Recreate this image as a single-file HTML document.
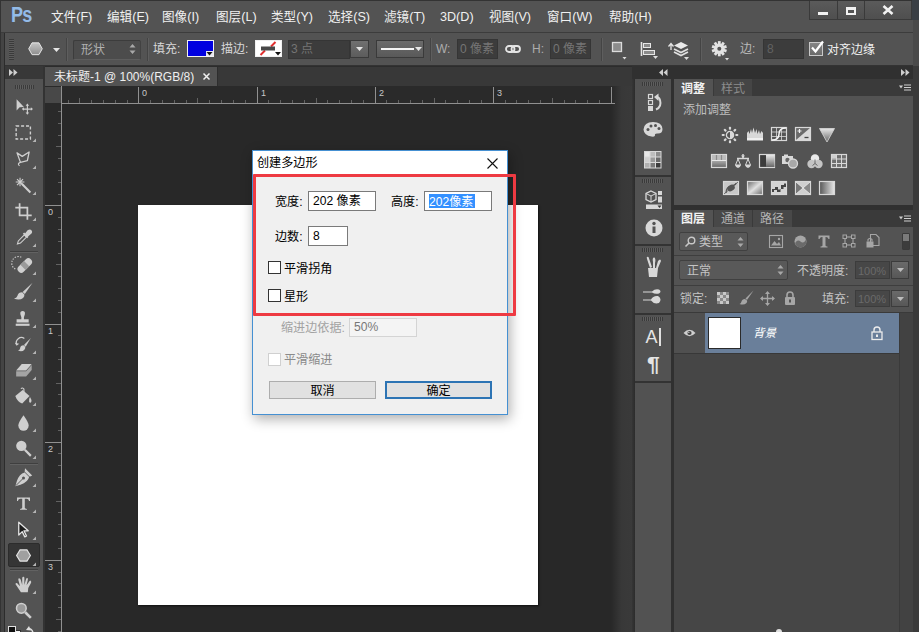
<!DOCTYPE html>
<html lang="zh-CN">
<head>
<meta charset="utf-8">
<title>Photoshop - 创建多边形</title>
<style>
html,body{margin:0;padding:0;}
body{width:919px;height:632px;overflow:hidden;position:relative;background:#535353;
 font-family:"Liberation Sans","Noto Sans CJK SC",sans-serif;font-size:12px;color:#e4e4e4;}
.a{position:absolute;}
.t{position:absolute;white-space:nowrap;line-height:16px;height:16px;}
svg{position:absolute;overflow:visible;}
/* ---------- menu bar ---------- */
#menubar{left:0;top:0;width:919px;height:32px;background:#535353;}
#menubar .t{top:9px;color:#f0f0f0;font-size:12.6px;}
#menubar #ps{left:11px;top:3px;font-size:22px;font-weight:bold;color:#93bbe8;letter-spacing:-1px;line-height:24px;height:24px;transform:scaleX(0.82);transform-origin:0 0;}
.wbtn{top:0;height:20px;background:linear-gradient(#5b5b5b,#4f4f4f);border:1px solid #3a3a3a;border-top:none;box-sizing:border-box;}
/* ---------- options bar ---------- */
#optbar{left:0;top:32px;width:919px;height:34px;background:#535353;border-top:1px solid #3c3c3c;border-bottom:1px solid #333;box-sizing:border-box;}
#optbar .t{color:#d8d8d8;}
.sep{position:absolute;top:5px;width:1px;height:23px;background:#444;border-right:1px solid #5e5e5e;}
.dk{position:absolute;background:#3c3c3c;border:1px solid #353535;box-sizing:border-box;color:#808080;}
/* ---------- left tools ---------- */
#tools{left:5px;top:66px;width:38px;height:566px;background:#535353;}
/* ---------- document ---------- */
#doc{left:45px;top:66px;width:570px;height:566px;background:#282828;}
/* ---------- right ---------- */
.ptab{position:absolute;top:0;height:17px;line-height:17px;font-size:12px;text-align:center;box-sizing:border-box;}
/* ---------- dialog ---------- */
#dlg{left:252px;top:150px;width:256px;height:265px;background:#f0f0f0;border:1px solid #4590d2;box-sizing:border-box;color:#000;box-shadow:2px 4px 12px rgba(0,0,0,.32);}
#dlg .t{color:#000;font-size:12.1px;}
.inp{position:absolute;background:#fff;border:1px solid #7a7a7a;box-sizing:border-box;height:20px;line-height:19px;padding-left:4px;font-size:12.1px;color:#000;white-space:nowrap;}
.cb{position:absolute;width:13px;height:13px;background:#fff;border:1px solid #333;box-sizing:border-box;}
.btn{position:absolute;height:18px;line-height:18px;text-align:center;background:#e1e1e1;border:1px solid #adadad;box-sizing:border-box;font-size:12.1px;color:#000;}
</style>
</head>
<body>

<!-- ================= MENU BAR ================= -->
<div id="menubar" class="a">
  <div id="ps" class="t">Ps</div>
  <div class="t" style="left:51px">文件(F)</div>
  <div class="t" style="left:107px">编辑(E)</div>
  <div class="t" style="left:162px">图像(I)</div>
  <div class="t" style="left:216px">图层(L)</div>
  <div class="t" style="left:271px">类型(Y)</div>
  <div class="t" style="left:328px">选择(S)</div>
  <div class="t" style="left:384px">滤镜(T)</div>
  <div class="t" style="left:440px">3D(D)</div>
  <div class="t" style="left:489px">视图(V)</div>
  <div class="t" style="left:547px">窗口(W)</div>
  <div class="t" style="left:609px">帮助(H)</div>
  <!-- window buttons -->
  <div class="a wbtn" style="left:809px;width:29px;"></div>
  <div class="a wbtn" style="left:837px;width:28px;"></div>
  <div class="a wbtn" style="left:864px;width:48px;"></div>
  <div class="a" style="left:818px;top:12px;width:10px;height:3px;background:#f2f2f2;"></div>
  <div class="a" style="left:846px;top:7px;width:10px;height:8px;border:2px solid #f2f2f2;border-top-width:3px;box-sizing:border-box;"></div>
  <svg style="left:882px;top:5px" width="12" height="10" viewBox="0 0 12 10"><path d="M1.5 1 L10.5 9 M10.5 1 L1.5 9" stroke="#f2f2f2" stroke-width="2.6" fill="none"/></svg>
</div>

<!-- ================= OPTIONS BAR ================= -->
<div id="optbar" class="a">
  <!-- grip -->
  <div class="a" style="left:9px;top:6px;width:5px;height:21px;background:repeating-linear-gradient(#3a3a3a 0 1px,#5c5c5c 1px 2px);"></div>
  <!-- hexagon tool -->
  <svg style="left:28px;top:9px" width="15" height="13.500" viewBox="0 0 17 15"><defs><linearGradient id="hx" x1="0" y1="0" x2="0" y2="1"><stop offset="0" stop-color="#c4c4c4"/><stop offset="1" stop-color="#8e8e8e"/></linearGradient></defs><path d="M4.6 0.8 H12.4 L16.2 7.5 L12.4 14.2 H4.6 L0.8 7.5 Z" fill="url(#hx)" stroke="#e6e6e6" stroke-width="1.1"/></svg>
  <svg style="left:53px;top:15px" width="7" height="4" viewBox="0 0 7 4"><path d="M0 0H7L3.5 4Z" fill="#e6e6e6"/></svg>
  <div class="sep" style="left:66px"></div>
  <!-- shape select -->
  <div class="dk" style="left:73px;top:7px;width:68px;height:20px;background:#4c4c4c;border-color:#3c3c3c #424242 #5e5e5e #3c3c3c;border-radius:2px;"></div>
  <div class="t" style="left:81px;top:9px;color:#b0b0b0;">形状</div>
  <svg style="left:129px;top:10px" width="7" height="12" viewBox="0 0 7 12"><path d="M0.5 4.5 L3.5 1 L6.5 4.5Z M0.5 7.5 L3.5 11 L6.5 7.5Z" fill="#a8a8a8"/></svg>
  <div class="sep" style="left:147px"></div>
  <div class="t" style="left:153px;top:8px;">填充:</div>
  <!-- fill swatch -->
  <div class="a" style="left:187px;top:7px;width:27px;height:17px;background:#0000e0;border:1px solid #f0f0f0;box-sizing:border-box;"></div>
  <svg style="left:206px;top:18px" width="7" height="5" viewBox="0 0 7 5"><rect width="7" height="5" fill="#e8e8f4"/><path d="M0.500 1H6.500L3.500 4.500Z" fill="#111"/></svg>
  <div class="t" style="left:221px;top:8px;">描边:</div>
  <!-- stroke swatch -->
  <div class="a" style="left:255px;top:7px;width:27px;height:17px;background:#fff;border:1px solid #f0f0f0;box-sizing:border-box;"></div>
  <svg style="left:255px;top:7px" width="27" height="17" viewBox="0 0 27 17"><path d="M16 6.500L20.500 2M5.500 15L10 10.500" stroke="#e03030" stroke-width="2"/><rect x="6" y="6.500" width="14" height="4" fill="#484848"/><path d="M20 12H26L23 15.500Z" fill="#111"/></svg>
  <!-- stroke width -->
  <div class="dk" style="left:288px;top:7px;width:62px;height:19px;"></div>
  <div class="t" style="left:291px;top:8px;color:#747474;">3 点</div>
  <div class="a" style="left:350px;top:7px;width:19px;height:18px;background:linear-gradient(#707070,#5c5c5c);border:1px solid #3a3a3a;box-sizing:border-box;"></div>
  <svg style="left:356px;top:14px" width="7" height="4" viewBox="0 0 7 4"><path d="M0 0H7L3.5 4Z" fill="#e6e6e6"/></svg>
  <!-- line style -->
  <div class="a" style="left:376px;top:7px;width:48px;height:18px;background:linear-gradient(#6b6b6b,#595959);border:1px solid #3a3a3a;box-sizing:border-box;"></div>
  <div class="a" style="left:381px;top:15px;width:33px;height:2px;background:#f4f4f4;"></div>
  <svg style="left:415px;top:14px" width="7" height="4" viewBox="0 0 7 4"><path d="M0 0H7L3.5 4Z" fill="#e6e6e6"/></svg>
  <div class="sep" style="left:430px"></div>
  <div class="t" style="left:436px;top:8px;color:#adadad;">W:</div>
  <div class="dk" style="left:457px;top:6px;width:41px;height:20px;"></div>
  <div class="t" style="left:460px;top:8px;color:#757575;">0 像素</div>
  <!-- link -->
  <svg style="left:505px;top:12px" width="16" height="8" viewBox="0 0 16 8"><rect x="1" y="1" width="8.500" height="6" rx="3" fill="none" stroke="#e4e4e4" stroke-width="1.800"/><rect x="6.500" y="1" width="8.500" height="6" rx="3" fill="none" stroke="#e4e4e4" stroke-width="1.800"/></svg>
  <div class="t" style="left:532px;top:8px;color:#adadad;">H:</div>
  <div class="dk" style="left:550px;top:6px;width:41px;height:20px;"></div>
  <div class="t" style="left:553px;top:8px;color:#757575;">0 像素</div>
  <div class="sep" style="left:601px"></div>
  <!-- path ops -->
  <svg style="left:611px;top:8px" width="16" height="19" viewBox="0 0 16 19"><rect x="1.500" y="1.500" width="9" height="9" fill="#8c8c8c" stroke="#dcdcdc" stroke-width="1.300"/><path d="M11.500 16H15.500L13.500 18.500Z" fill="#ddd"/></svg>
  <!-- align -->
  <svg style="left:640px;top:9px" width="18" height="18" viewBox="0 0 18 18"><path d="M1.5 0V14" stroke="#e6e6e6" stroke-width="1.6"/><rect x="3.5" y="1.5" width="7" height="4" fill="#8a8a8a" stroke="#e6e6e6"/><rect x="3.5" y="8.5" width="11" height="4" fill="#8a8a8a" stroke="#e6e6e6"/><path d="M13 14H18L15.5 17Z" fill="#ddd"/></svg>
  <!-- arrange -->
  <svg style="left:668px;top:8px" width="22" height="20" viewBox="0 0 22 20"><path d="M3 3V9M0.5 5.5L3 2.5L5.500 5.5" stroke="#e6e6e6" stroke-width="1.3" fill="none"/><path d="M13 1L20 4.500L13 8L6 4.500Z" fill="#eaeaea"/><path d="M6 8L13 11.500L20 8M6 11L13 14.500L20 11" stroke="#e0e0e0" stroke-width="1.7" fill="none"/><path d="M16 16H21L18.5 19Z" fill="#ddd"/></svg>
  <div class="sep" style="left:700px"></div>
  <!-- gear -->
  <svg style="left:711px;top:7px" width="20" height="22" viewBox="0 0 20 22"><g transform="translate(8.300 8.700)"><g fill="#e2e2e2"><rect x="-1.400" y="-7.600" width="2.800" height="3.400" transform="rotate(0)"/><rect x="-1.400" y="-7.600" width="2.800" height="3.400" transform="rotate(36)"/><rect x="-1.400" y="-7.600" width="2.800" height="3.400" transform="rotate(72)"/><rect x="-1.400" y="-7.600" width="2.800" height="3.400" transform="rotate(108)"/><rect x="-1.400" y="-7.600" width="2.800" height="3.400" transform="rotate(144)"/><rect x="-1.400" y="-7.600" width="2.800" height="3.400" transform="rotate(180)"/><rect x="-1.400" y="-7.600" width="2.800" height="3.400" transform="rotate(216)"/><rect x="-1.400" y="-7.600" width="2.800" height="3.400" transform="rotate(252)"/><rect x="-1.400" y="-7.600" width="2.800" height="3.400" transform="rotate(288)"/><rect x="-1.400" y="-7.600" width="2.800" height="3.400" transform="rotate(324)"/><circle r="5.300"/></g><circle r="2" fill="#535353"/></g><path d="M14 18H18L16 20.500Z" fill="#ddd"/></svg>
  <div class="t" style="left:740px;top:8px;color:#bababa;">边:</div>
  <div class="dk" style="left:763px;top:6px;width:41px;height:20px;"></div>
  <div class="t" style="left:767px;top:8px;color:#626262;">8</div>
  <!-- checkbox -->
  <div class="a" style="left:809px;top:9px;width:14px;height:14px;background:linear-gradient(#858585,#6a6a6a);border:1px solid #c8c8c8;box-sizing:border-box;"></div>
  <svg style="left:810px;top:7px" width="15" height="15" viewBox="0 0 15 15"><path d="M2 7.500L5.500 11.500L13 1.500" stroke="#fff" stroke-width="2.200" fill="none"/></svg>
  <div class="t" style="left:827px;top:9px;color:#f0f0f0;">对齐边缘</div>
</div>

<!-- ================= LEFT TOOLS ================= -->
<div class="a" style="left:0;top:33px;width:5px;height:599px;background:#444;border-right:1px solid #2c2c2c;box-sizing:border-box;"></div>
<div class="a" style="left:43px;top:66px;width:2px;height:566px;background:#333;"></div>
<div id="tools" class="a">
  <div class="a" style="left:0;top:0;width:38px;height:13px;background:#383838;"></div>
  <svg style="left:4px;top:3px" width="9" height="7" viewBox="0 0 9 7"><path d="M0 0L4 3.500L0 7ZM4.500 0L8.500 3.500L4.500 7Z" fill="#cfcfcf"/></svg>
  <div class="a" style="left:10px;top:19px;width:19px;height:4px;background:repeating-linear-gradient(90deg,#3a3a3a 0 1px,#5e5e5e 1px 2px);"></div>
  <div class="a" style="left:3px;top:477px;width:32px;height:24px;background:#353535;border:1px solid #2c2c2c;box-sizing:border-box;border-radius:2px;"></div>
  <div class="a" style="left:5px;top:185px;width:28px;height:1px;background:#3f3f3f;border-bottom:1px solid #626262;"></div>
  <div class="a" style="left:5px;top:397px;width:28px;height:1px;background:#3f3f3f;border-bottom:1px solid #626262;"></div>
  <div class="a" style="left:5px;top:503px;width:28px;height:1px;background:#3f3f3f;border-bottom:1px solid #626262;"></div>
  <svg style="left:8.500px;top:30.5px" width="19" height="19" viewBox="0 0 22 22"><path d="M3 2.500V15.500L6.500 12L11.500 11.500Z" fill="#cfcfcf"/><path d="M15.500 9V19M10.500 14H20.500" stroke="#cfcfcf" stroke-width="1.300"/><path d="M15.500 7.500L13.500 10H17.500ZM15.500 20.500L13.500 18H17.500ZM9 14L11.500 12V16ZM22 14L19.500 12V16Z" fill="#cfcfcf"/></svg>
  <svg style="left:8.500px;top:56.5px" width="19" height="19" viewBox="0 0 22 22"><rect x="2.500" y="3.500" width="16.500" height="15" fill="none" stroke="#cfcfcf" stroke-width="1.600" stroke-dasharray="3.500 2.200"/></svg>
  <svg style="left:27px;top:72px" width="4" height="4" viewBox="0 0 4 4"><path d="M4 0.500V4H0.500Z" fill="#b4b4b4"/></svg>
  <svg style="left:8.500px;top:83px" width="19" height="19" viewBox="0 0 22 22"><path d="M3.500 4.500L9.500 8.500L17.500 3.500L15.500 13.500L7.500 15.500Z" fill="none" stroke="#cfcfcf" stroke-width="1.500" stroke-linejoin="round"/><path d="M7.500 15.500C5 16 4 18 6.500 19.500" fill="none" stroke="#cfcfcf" stroke-width="1.300"/></svg>
  <svg style="left:27px;top:98.5px" width="4" height="4" viewBox="0 0 4 4"><path d="M4 0.500V4H0.500Z" fill="#b4b4b4"/></svg>
  <svg style="left:8.500px;top:109.5px" width="19" height="19" viewBox="0 0 22 22"><path d="M9 9L19 19" stroke="#cfcfcf" stroke-width="2.400"/><path d="M7 2V12M2 7H12M3.500 3.500L10.500 10.500M10.500 3.500L3.500 10.500" stroke="#cfcfcf" stroke-width="1.300"/></svg>
  <svg style="left:27px;top:125px" width="4" height="4" viewBox="0 0 4 4"><path d="M4 0.500V4H0.500Z" fill="#b4b4b4"/></svg>
  <svg style="left:8.500px;top:135.5px" width="19" height="19" viewBox="0 0 22 22"><path d="M6.500 1.500V15.500H20.500M1.500 6.500H15.500V20.500" fill="none" stroke="#cfcfcf" stroke-width="2"/></svg>
  <svg style="left:27px;top:151px" width="4" height="4" viewBox="0 0 4 4"><path d="M4 0.500V4H0.500Z" fill="#b4b4b4"/></svg>
  <svg style="left:8.500px;top:161.5px" width="19" height="19" viewBox="0 0 22 22"><path d="M4 18.500L5 15L12 8L14.500 10.500L7.500 17.500Z" fill="none" stroke="#cfcfcf" stroke-width="1.300"/><path d="M11 6L16 11M13 8L16.500 3.500Q18.500 2 19.500 3.500Q20.500 5 18.500 6.500L14.500 10" stroke="#cfcfcf" stroke-width="2.200" fill="#cfcfcf"/></svg>
  <svg style="left:27px;top:177px" width="4" height="4" viewBox="0 0 4 4"><path d="M4 0.500V4H0.500Z" fill="#b4b4b4"/></svg>
  <svg style="left:8.500px;top:189.5px" width="19" height="19" viewBox="0 0 22 22"><g transform="translate(1.500 0) rotate(-45 11 11)"><rect x="1" y="6.800" width="20" height="8.400" rx="4" fill="#cfcfcf"/><rect x="8" y="6.800" width="6" height="8.400" fill="#9a9a9a"/></g><path d="M4 15A7.500 7.500 0 0 1 11 1.500" fill="none" stroke="#cfcfcf" stroke-width="1.300" stroke-dasharray="1.500 1.600" transform="translate(-2.500 0)"/></svg>
  <svg style="left:27px;top:205px" width="4" height="4" viewBox="0 0 4 4"><path d="M4 0.500V4H0.500Z" fill="#b4b4b4"/></svg>
  <svg style="left:8.500px;top:216px" width="19" height="19" viewBox="0 0 22 22"><path d="M21.500 1L10 11.500L12.500 14Z" fill="#cfcfcf"/><path d="M9.500 12Q5 12 4 16Q3.500 18.500 0 19.500Q7 21.500 10.500 18.500Q12.500 16.500 12 14.500Z" fill="#cfcfcf"/></svg>
  <svg style="left:27px;top:231.5px" width="4" height="4" viewBox="0 0 4 4"><path d="M4 0.500V4H0.500Z" fill="#b4b4b4"/></svg>
  <svg style="left:8.500px;top:242.5px" width="19" height="19" viewBox="0 0 22 22"><g transform="translate(-1 0)"><path d="M8.500 3.500Q11 1 13.500 3.500Q14.500 6 12.500 9.500V12H18V15.500H4V12H9.500V9.500Q7.500 6 8.500 3.500Z" fill="#cfcfcf"/><rect x="3" y="17" width="16" height="2.500" fill="#cfcfcf"/></g></svg>
  <svg style="left:27px;top:258px" width="4" height="4" viewBox="0 0 4 4"><path d="M4 0.500V4H0.500Z" fill="#b4b4b4"/></svg>
  <svg style="left:8.500px;top:268.5px" width="19" height="19" viewBox="0 0 22 22"><path d="M19.500 3.500L11.500 11.500L13.500 13.500Z" fill="#cfcfcf"/><path d="M11 12Q7.500 12 7 15.500Q6.500 17.500 4.500 18Q9.500 20 12 17Q13.500 15 13 13.500Z" fill="#cfcfcf"/><path d="M3 11A6 6 0 0 1 12 4" fill="none" stroke="#cfcfcf" stroke-width="1.500"/><path d="M1 9L3 12.500L6 10Z" fill="#cfcfcf"/></svg>
  <svg style="left:27px;top:284px" width="4" height="4" viewBox="0 0 4 4"><path d="M4 0.500V4H0.500Z" fill="#b4b4b4"/></svg>
  <svg style="left:8.500px;top:294.5px" width="19" height="19" viewBox="0 0 22 22"><path d="M9 3.500H20.500L14 11H2.500Z" fill="#cfcfcf"/><path d="M2.500 12H14L20.500 4.500V10.500L14 18H2.500Z" fill="#a4a4a4"/></svg>
  <svg style="left:27px;top:310px" width="4" height="4" viewBox="0 0 4 4"><path d="M4 0.500V4H0.500Z" fill="#b4b4b4"/></svg>
  <svg style="left:8.500px;top:320.5px" width="19" height="19" viewBox="0 0 22 22"><path d="M1.500 10.500L10 3.500L18 10.500L9.500 19Q4 17.500 1.500 10.500Z" fill="#cfcfcf"/><path d="M8 2Q10 0 11.500 2.500L11.500 8" fill="none" stroke="#cfcfcf" stroke-width="1.300"/><path d="M18.500 11.500Q21 15 20 17.500Q18.500 19 17.500 17Q17 14 18.500 11.500Z" fill="#cfcfcf"/></svg>
  <svg style="left:27px;top:336px" width="4" height="4" viewBox="0 0 4 4"><path d="M4 0.500V4H0.500Z" fill="#b4b4b4"/></svg>
  <svg style="left:8.500px;top:346.5px" width="19" height="19" viewBox="0 0 22 22"><path d="M11 2.500Q17 11 17 14.500A6 6 0 0 1 5 14.500Q5 11 11 2.500Z" fill="#cfcfcf"/></svg>
  <svg style="left:27px;top:362px" width="4" height="4" viewBox="0 0 4 4"><path d="M4 0.500V4H0.500Z" fill="#b4b4b4"/></svg>
  <svg style="left:8.500px;top:373px" width="19" height="19" viewBox="0 0 22 22"><circle cx="8.500" cy="8" r="6" fill="#cfcfcf"/><path d="M12.500 12.500L19.500 19.500" stroke="#cfcfcf" stroke-width="2.600"/></svg>
  <svg style="left:27px;top:388.5px" width="4" height="4" viewBox="0 0 4 4"><path d="M4 0.500V4H0.500Z" fill="#b4b4b4"/></svg>
  <svg style="left:8.500px;top:401.5px" width="19" height="19" viewBox="0 0 22 22"><g transform="translate(11 11) scale(1.180) translate(-11 -10.500)"><path d="M12.500 1.500L19.500 8.500L16.500 10Q15.500 15 8 17.500L3 19L4.500 14Q7 6.500 12 5.500Z" fill="#cfcfcf"/><circle cx="11" cy="11" r="1.500" fill="#535353"/><path d="M3.500 18.500L10 12" stroke="#535353" stroke-width="0.900"/><path d="M11.500 4.500L17.500 10.500" stroke="#535353" stroke-width="0.900"/></g></svg>
  <svg style="left:27px;top:417px" width="4" height="4" viewBox="0 0 4 4"><path d="M4 0.500V4H0.500Z" fill="#b4b4b4"/></svg>
  <svg style="left:8.500px;top:427.5px" width="19" height="19" viewBox="0 0 22 22"><path d="M3.500 4H18.500V8H17.500Q17 5.500 14.500 5.500H12.500V16Q12.500 17 15 17.300V18.300H7V17.300Q9.500 17 9.500 16V5.500H7.500Q5 5.500 4.500 8H3.500Z" fill="#cfcfcf"/></svg>
  <svg style="left:27px;top:443px" width="4" height="4" viewBox="0 0 4 4"><path d="M4 0.500V4H0.500Z" fill="#b4b4b4"/></svg>
  <svg style="left:8.500px;top:454px" width="19" height="19" viewBox="0 0 22 22"><path d="M5.500 2.500V17.500L9.500 13.500L12.500 19.500L14.500 18.500L11.500 12.500H16.500Z" fill="#1c1c1c" stroke="#e6e6e6" stroke-width="1.500" stroke-linejoin="round"/></svg>
  <svg style="left:27px;top:469.5px" width="4" height="4" viewBox="0 0 4 4"><path d="M4 0.500V4H0.500Z" fill="#b4b4b4"/></svg>
  <svg style="left:8.500px;top:480px" width="19" height="19" viewBox="0 0 22 22"><path d="M7 4.500H15L19 11L15 17.500H7L3 11Z" fill="#a0a0a0" stroke="#e4e4e4" stroke-width="1.300"/></svg>
  <svg style="left:27px;top:495.5px" width="4" height="4" viewBox="0 0 4 4"><path d="M4 0.500V4H0.500Z" fill="#b4b4b4"/></svg>
  <svg style="left:8.500px;top:508.5px" width="19" height="19" viewBox="0 0 22 22"><path d="M8 20L3 12.500Q1 10.500 2 9.500Q3.500 9 5 11L7 13L5 5.500Q5 3.500 6.500 4Q7.500 4 8 6L9.500 11.500L9.500 3.500Q10 1.500 11 2Q12 2 12 3.500L12 11.500L14 4.500Q14.500 3 15.500 3.500Q16.500 4 16 5.500L14.500 12L18 7Q19 6 19.500 7Q20.500 8 19.500 9.500L16.500 15L16 20Z" fill="#cfcfcf"/></svg>
  <svg style="left:27px;top:524px" width="4" height="4" viewBox="0 0 4 4"><path d="M4 0.500V4H0.500Z" fill="#b4b4b4"/></svg>
  <svg style="left:8.500px;top:534.5px" width="19" height="19" viewBox="0 0 22 22"><circle cx="8.500" cy="8.500" r="5.600" fill="#9a9a9a" stroke="#cfcfcf" stroke-width="1.800"/><path d="M13 13L19.500 19.500" stroke="#cfcfcf" stroke-width="3"/></svg>
  <div class="a" style="left:8px;top:564px;width:6px;height:6px;background:#f4f4f4;border:1px solid #333;"></div>
  <div class="a" style="left:3px;top:560px;width:6px;height:6px;background:#111;border:1px solid #e0e0e0;"></div>
  <svg style="left:21px;top:559px" width="10" height="12" viewBox="0 0 10 12"><path d="M2 4Q6 3 7 8V12" fill="none" stroke="#e0e0e0" stroke-width="1.500"/><path d="M0 5L3 1L5 5.500Z" fill="#e0e0e0"/></svg>
</div>

<!-- ================= DOCUMENT ================= -->
<div id="doc" class="a">
  <div class="a" style="left:0;top:0;width:570px;height:20px;background:#383838;border-top:1px solid #2c2c2c;box-sizing:border-box;"></div>
  <div class="a" style="left:0;top:1px;width:173px;height:19px;background:#535353;border-right:1px solid #2e2e2e;box-sizing:border-box;"></div>
  <div class="t" style="left:9px;top:3px;color:#efefef;">未标题-1 @ 100%(RGB/8)</div>
  <svg style="left:158px;top:7px" width="7" height="7" viewBox="0 0 7 7"><path d="M0.500 0.500L6.500 6.500M6.500 0.500L0.500 6.500" stroke="#f0f0f0" stroke-width="1.500"/></svg>
  <div class="a" style="left:0;top:20px;width:570px;height:18px;background:#2a2a2a;border-bottom:1px solid #909090;box-sizing:border-box;"></div>
  <div class="a" style="left:0;top:20px;width:17px;height:546px;background:#2a2a2a;border-right:1px solid #909090;box-sizing:border-box;"></div>
  <div class="a" style="left:0;top:21px;width:16px;height:16px;background:#484848;"></div>
  <svg style="left:0;top:0" width="570" height="566" viewBox="0 0 570 566" shape-rendering="crispEdges">
    <path d="M23.5 34V37 M34.5 32V37 M46.5 34V37 M58.5 34V37 M70.5 34V37 M82.5 34V37 M105.5 34V37 M117.5 34V37 M129.5 34V37 M141.5 34V37 M152.5 32V37 M164.5 34V37 M176.5 34V37 M188.5 34V37 M200.5 34V37 M223.5 34V37 M235.5 34V37 M247.5 34V37 M259.5 34V37 M271.5 32V37 M282.5 34V37 M294.5 34V37 M306.5 34V37 M318.5 34V37 M341.5 34V37 M353.5 34V37 M365.5 34V37 M377.5 34V37 M389.5 32V37 M400.5 34V37 M412.5 34V37 M424.5 34V37 M436.5 34V37 M460.5 34V37 M471.5 34V37 M483.5 34V37 M495.5 34V37 M507.5 32V37 M519.5 34V37 M530.5 34V37 M542.5 34V37 M554.5 34V37 M13 45.5H16 M13 57.5H16 M13 69.5H16 M11 80.5H16 M13 92.5H16 M13 104.5H16 M13 116.5H16 M13 128.5H16 M13 151.5H16 M13 163.5H16 M13 175.5H16 M13 187.5H16 M11 198.5H16 M13 210.5H16 M13 222.5H16 M13 234.5H16 M13 246.5H16 M13 269.5H16 M13 281.5H16 M13 293.5H16 M13 305.5H16 M11 317.5H16 M13 328.5H16 M13 340.5H16 M13 352.5H16 M13 364.5H16 M13 387.5H16 M13 399.5H16 M13 411.5H16 M13 423.5H16 M11 435.5H16 M13 446.5H16 M13 458.5H16 M13 470.5H16 M13 482.5H16 M13 506.5H16 M13 517.5H16 M13 529.5H16 M13 541.5H16 M11 553.5H16 M13 565.5H16" stroke="#626262" stroke-width="1" fill="none"/>
    <path d="M93.5 21V37 M212.5 21V37 M330.5 21V37 M448.5 21V37 M566.5 21V37 M0 139.5H16 M0 258.5H16 M0 376.5H16 M0 494.5H16" stroke="#909090" stroke-width="1" fill="none"/>
  </svg>
  <div class="t" style="left:97px;top:22px;font-size:9px;line-height:11px;height:11px;color:#c8c8c8;">0</div>
  <div class="t" style="left:216px;top:22px;font-size:9px;line-height:11px;height:11px;color:#c8c8c8;">1</div>
  <div class="t" style="left:334px;top:22px;font-size:9px;line-height:11px;height:11px;color:#c8c8c8;">2</div>
  <div class="t" style="left:452px;top:22px;font-size:9px;line-height:11px;height:11px;color:#c8c8c8;">3</div>
  <div class="t" style="left:3px;top:141px;font-size:9px;line-height:11px;height:11px;color:#c8c8c8;">0</div>
  <div class="t" style="left:3px;top:260px;font-size:9px;line-height:11px;height:11px;color:#c8c8c8;">1</div>
  <div class="t" style="left:3px;top:378px;font-size:9px;line-height:11px;height:11px;color:#c8c8c8;">2</div>
  <div class="t" style="left:3px;top:496px;font-size:9px;line-height:11px;height:11px;color:#c8c8c8;">3</div>
  <div class="a" style="left:93px;top:139px;width:400px;height:400px;background:#fff;box-shadow:1px 1px 2px rgba(0,0,0,.6);"></div>
</div>

<!-- ================= RIGHT PANELS ================= -->
<div id="right" class="a" style="left:611px;top:66px;width:308px;height:566px;background:#3a3a3a;">
  <div class="a" style="left:0px;top:0px;width:21px;height:20px;background:#383838;border-top:1px solid #2c2c2c;box-sizing:border-box;"></div>
  <div class="a" style="left:0px;top:20px;width:21px;height:546px;background:linear-gradient(90deg,#282828,#383838 50%,#3a3a3a);"></div>
  <div class="a" style="left:0px;top:37px;width:4px;height:1px;background:#909090;"></div>
  <div class="a" style="left:0px;top:21px;width:1px;height:16px;background:#909090;"></div>
  <div class="a" style="left:21px;top:0px;width:281px;height:13px;background:#303030;"></div>
  <svg style="left:48px;top:3px" width="9" height="7" viewBox="0 0 9 7"><path d="M4 0L0 3.500L4 7ZM8.500 0L4.500 3.500L8.500 7Z" fill="#cfcfcf"/></svg>
  <svg style="left:290px;top:3px" width="9" height="7" viewBox="0 0 9 7"><path d="M0 0L4 3.500L0 7ZM4.500 0L8.500 3.500L4.500 7Z" fill="#cfcfcf"/></svg>
  <div class="a" style="left:21px;top:13px;width:3px;height:553px;background:linear-gradient(90deg,#363636,#2c2c2c);"></div>
  <div class="a" style="left:24px;top:13px;width:36px;height:553px;background:#525252;"></div>
  <div class="a" style="left:60px;top:13px;width:3px;height:553px;background:#303030;"></div>
  <div class="a" style="left:31px;top:16px;width:21px;height:4px;background:repeating-linear-gradient(90deg,#3a3a3a 0 1px,#5e5e5e 1px 2px);"></div>
  <div class="a" style="left:31px;top:113px;width:21px;height:4px;background:repeating-linear-gradient(90deg,#3a3a3a 0 1px,#5e5e5e 1px 2px);"></div>
  <div class="a" style="left:31px;top:182px;width:21px;height:4px;background:repeating-linear-gradient(90deg,#3a3a3a 0 1px,#5e5e5e 1px 2px);"></div>
  <div class="a" style="left:31px;top:250.5px;width:21px;height:4px;background:repeating-linear-gradient(90deg,#3a3a3a 0 1px,#5e5e5e 1px 2px);"></div>
  <div class="a" style="left:24px;top:109px;width:36px;height:2px;background:#333;"></div>
  <div class="a" style="left:24px;top:178px;width:36px;height:2px;background:#333;"></div>
  <div class="a" style="left:24px;top:246.5px;width:36px;height:2px;background:#333;"></div>
  <div class="a" style="left:24px;top:315px;width:36px;height:2px;background:#333;"></div>
  <svg style="left:35px;top:27px" width="18" height="18" viewBox="0 0 18 18"><rect x="2.500" y="1.500" width="4" height="4" fill="none" stroke="#d8d8d8" stroke-width="1.200"/><rect x="2.500" y="7.500" width="4" height="4" fill="none" stroke="#d8d8d8" stroke-width="1.200"/><rect x="2" y="13" width="5" height="5" fill="#d8d8d8"/><path d="M10 16.500Q16 14 14 7Q13 4 10.500 4" fill="none" stroke="#d8d8d8" stroke-width="2"/><path d="M8 4L12.500 0.500V8Z" fill="#d8d8d8"/></svg>
  <svg style="left:32px;top:55px" width="20" height="16" viewBox="0 0 20 16"><path d="M10 1Q19 1 19.500 8Q19.500 13 14 12.500Q11.500 12.500 12 14.500Q12 16 8.500 15.500Q1 14.500 0.500 8.500Q1 1 10 1Z" fill="#d8d8d8"/><circle cx="5" cy="8.500" r="1.500" fill="#535353"/><circle cx="8" cy="5" r="1.500" fill="#535353"/><circle cx="12.500" cy="4.500" r="1.500" fill="#535353"/><circle cx="16" cy="7.500" r="1.500" fill="#535353"/></svg>
  <svg style="left:33px;top:84.5px" width="18" height="18" viewBox="0 0 18 18"><rect x="0" y="0" width="17.500" height="17.500" fill="#d8d8d8"/><rect x="1" y="1" width="4.500" height="4.500" fill="#e8e8e8"/><rect x="6.5" y="1" width="4.500" height="4.500" fill="#bdbdbd"/><rect x="12" y="1" width="4.500" height="4.500" fill="#8c8c8c"/><rect x="1" y="6.5" width="4.500" height="4.500" fill="#d0d0d0"/><rect x="6.5" y="6.5" width="4.500" height="4.500" fill="#9a9a9a"/><rect x="12" y="6.5" width="4.500" height="4.500" fill="#6a6a6a"/><rect x="1" y="12" width="4.500" height="4.500" fill="#b0b0b0"/><rect x="6.5" y="12" width="4.500" height="4.500" fill="#7a7a7a"/><rect x="12" y="12" width="4.500" height="4.500" fill="#3c3c3c"/></svg>
  <svg style="left:34px;top:124px" width="18" height="20" viewBox="0 0 18 20"><path d="M6 1L11 3.500V9.500L6 12L1 9.500V3.500Z" fill="none" stroke="#d8d8d8" stroke-width="1.300"/><path d="M1 3.500L6 6L11 3.500M6 6V12" fill="none" stroke="#d8d8d8" stroke-width="1"/><rect x="13" y="1" width="4" height="4" fill="#d8d8d8"/><rect x="13" y="6.500" width="4" height="6" fill="#d8d8d8"/><rect x="1" y="14.500" width="16" height="4.500" fill="#d8d8d8"/><path d="M12.500 15.500H16.500L14.500 18Z" fill="#333"/></svg>
  <svg style="left:33.5px;top:152.5px" width="18" height="18" viewBox="0 0 18 18"><circle cx="9" cy="9" r="8.500" fill="#d8d8d8"/><rect x="7.500" y="7.500" width="3" height="6.500" fill="#535353"/><circle cx="9" cy="4.500" r="1.700" fill="#535353"/></svg>
  <svg style="left:33px;top:190px" width="18" height="22" viewBox="0 0 18 22"><path d="M4 12H14L13 21H5Z" fill="#d8d8d8"/><path d="M6 12L3 3Q2 0 4.500 1L8 11ZM9 12V6Q8 1 10.500 1.500Q12 3 11 7V12ZM12 12L14 5Q16.500 2 17 5L14 12Z" fill="#d8d8d8"/></svg>
  <svg style="left:32px;top:221px" width="20" height="18" viewBox="0 0 20 18"><path d="M0 4.500H9Q12 1.500 16 2.500Q19 4.500 16 6.500Q12 7.500 9 5.500H0Z" fill="#d8d8d8"/><path d="M0 12.500H8Q10 8.500 15 9Q19.500 12 16 16Q11 17.500 8 13.500H0Z" fill="#d8d8d8"/></svg>
  <div class="t" style="left:34.5px;top:261px;font-size:18px;line-height:20px;height:20px;color:#e4e4e4;">A</div>
  <div class="a" style="left:48px;top:262px;width:1.5px;height:18px;background:#e0e0e0;"></div>
  <div class="t" style="left:36px;top:287px;font-size:20px;line-height:22px;height:22px;color:#e4e4e4;font-weight:bold;transform:scaleX(1.150);transform-origin:0 0;">¶</div>
  <div class="a" style="left:63px;top:13px;width:239px;height:17px;background:#3a3a3a;"></div>
  <div class="a" style="left:63px;top:13px;width:39px;height:17px;background:#535353;"></div>
  <div class="a" style="left:103px;top:13px;width:38px;height:17px;background:#454545;"></div>
  <div class="t" style="left:70px;top:15px;color:#f2f2f2;font-weight:bold;">调整</div>
  <div class="t" style="left:110px;top:15px;color:#8c8c8c;">样式</div>
  <svg style="left:288px;top:18px" width="12" height="8" viewBox="0 0 12 8"><path d="M0 1.500H4L2 4.500Z" fill="#cfcfcf"/><path d="M5 1H12M5 3.500H12M5 6H12" stroke="#cfcfcf" stroke-width="1.200"/></svg>
  <div class="a" style="left:63px;top:30px;width:239px;height:109px;background:#535353;"></div>
  <div class="t" style="left:72px;top:36px;color:#bdbdbd;">添加调整</div>
  <svg width="0" height="0" style="left:0;top:0"><defs><linearGradient id="gh" x1="0" y1="0" x2="1" y2="0"><stop offset="0" stop-color="#555"/><stop offset="1" stop-color="#e8e8e8"/></linearGradient><linearGradient id="gv" x1="0" y1="0" x2="0" y2="1"><stop offset="0" stop-color="#e8e8e8"/><stop offset="1" stop-color="#666"/></linearGradient><linearGradient id="gd" x1="0" y1="0" x2="1" y2="1"><stop offset="0" stop-color="#6a6a6a"/><stop offset="0.500" stop-color="#e0e0e0"/><stop offset="1" stop-color="#6a6a6a"/></linearGradient></defs></svg>
  <svg style="left:111px;top:61px" width="16" height="16" viewBox="0 0 16 16"><g transform="translate(8 8)"><circle r="3.600" fill="none" stroke="#d8d8d8" stroke-width="1.300"/><path d="M0 -3.600A3.600 3.600 0 0 1 0 3.600Z" fill="#d8d8d8"/><rect x="-1.100" y="-8.300" width="2.200" height="3" rx="0.800" fill="#d8d8d8" transform="rotate(0)"/><rect x="-1.100" y="-8.300" width="2.200" height="3" rx="0.800" fill="#d8d8d8" transform="rotate(45)"/><rect x="-1.100" y="-8.300" width="2.200" height="3" rx="0.800" fill="#d8d8d8" transform="rotate(90)"/><rect x="-1.100" y="-8.300" width="2.200" height="3" rx="0.800" fill="#d8d8d8" transform="rotate(135)"/><rect x="-1.100" y="-8.300" width="2.200" height="3" rx="0.800" fill="#d8d8d8" transform="rotate(180)"/><rect x="-1.100" y="-8.300" width="2.200" height="3" rx="0.800" fill="#d8d8d8" transform="rotate(225)"/><rect x="-1.100" y="-8.300" width="2.200" height="3" rx="0.800" fill="#d8d8d8" transform="rotate(270)"/><rect x="-1.100" y="-8.300" width="2.200" height="3" rx="0.800" fill="#d8d8d8" transform="rotate(315)"/></g></svg>
  <svg style="left:136px;top:61px" width="16" height="14" viewBox="0 0 16 14"><path d="M0 13V6L1.500 4L2.500 7L4 2L5 6L6.500 0.500L8 6L9.500 2L10.500 7L12 3L13 7L14.500 4L16 6V13Z" fill="#d8d8d8"/><rect x="0" y="11" width="16" height="2.500" fill="#f0f0f0"/></svg>
  <svg style="left:160px;top:61px" width="16" height="14" viewBox="0 0 16 14"><rect x="0.500" y="0.500" width="15" height="13" fill="none" stroke="#d8d8d8" stroke-width="1.200"/><path d="M0.500 5H15.500M0.500 9.500H15.500M5.500 0.500V13.500M10.500 0.500V13.500" stroke="#d8d8d8" stroke-width="0.800"/><path d="M1 13Q8 13 8 7Q8 1 15 1" fill="none" stroke="#f4f4f4" stroke-width="1.500"/></svg>
  <svg style="left:184px;top:61px" width="16" height="14" viewBox="0 0 16 14"><rect x="0.500" y="0.500" width="15" height="13" fill="#6a6a6a" stroke="#d8d8d8" stroke-width="1.200"/><path d="M1 13L15 1V13Z" fill="#d8d8d8"/><path d="M2.500 4H6.500M4.500 2V6" stroke="#f0f0f0" stroke-width="1.200"/><path d="M9.500 10.500H13.500" stroke="#444" stroke-width="1.300"/></svg>
  <svg style="left:208px;top:62px" width="16" height="15" viewBox="0 0 16 15"><path d="M0.500 0.500H15.500L8 14Z" fill="url(#gv)" stroke="#d8d8d8" stroke-width="0.800"/></svg>
  <svg style="left:100px;top:88px" width="16" height="14" viewBox="0 0 16 14"><rect x="0.500" y="0.500" width="15" height="13" fill="url(#gv)" stroke="#d8d8d8" stroke-width="1.200"/><rect x="1" y="1" width="14" height="5" fill="#bcbcbc"/><path d="M5.500 1V6M10.500 1V6" stroke="#8a8a8a" stroke-width="1.200"/><path d="M1 6.500H15" stroke="#e8e8e8" stroke-width="1"/></svg>
  <svg style="left:124px;top:88px" width="16" height="15" viewBox="0 0 16 15"><path d="M8 0V4M2 4.500H14" stroke="#d8d8d8" stroke-width="1.500"/><path d="M6 1.500H10L8 4Z" fill="#d8d8d8"/><path d="M3 5L0.500 11H5.500ZM13 5L10.500 11H15.500Z" fill="none" stroke="#d8d8d8" stroke-width="1"/><path d="M0 11H6Q5 14 3 14Q1 14 0 11ZM10 11H16Q15 14 13 14Q11 14 10 11Z" fill="#d8d8d8"/></svg>
  <svg style="left:148px;top:88px" width="16" height="14" viewBox="0 0 16 14"><rect x="0.500" y="0.500" width="15" height="13" fill="#3c3c3c" stroke="#d8d8d8" stroke-width="1.200"/><rect x="7" y="1" width="8.500" height="12" fill="url(#gv)"/></svg>
  <svg style="left:171px;top:88px" width="17" height="15" viewBox="0 0 17 15"><rect x="0" y="2" width="11" height="8" fill="#d8d8d8"/><rect x="2" y="0.500" width="4" height="2" fill="#d8d8d8"/><circle cx="5.500" cy="6" r="2.200" fill="#666"/><circle cx="11" cy="9.500" r="4.500" fill="#a8a8a8" stroke="#d8d8d8" stroke-width="1.300"/></svg>
  <svg style="left:196px;top:88px" width="16" height="15" viewBox="0 0 16 15"><circle cx="8" cy="4.500" r="4.200" fill="#eaeaea"/><circle cx="4.500" cy="10" r="4.200" fill="#c4c4c4"/><circle cx="11.500" cy="10" r="4.200" fill="#c4c4c4"/><path d="M8 5.500V9.500L5.500 11.500M8 9.500L10.500 11.500" stroke="#666" stroke-width="1" fill="none"/></svg>
  <svg style="left:220px;top:88px" width="16" height="14" viewBox="0 0 16 14"><rect x="0.500" y="0.500" width="15" height="13" fill="#6e6e6e" stroke="#d8d8d8" stroke-width="1.200"/><path d="M0.500 5H15.500M0.500 9.500H15.500M5.500 0.500V13.500M10.500 0.500V13.500" stroke="#d8d8d8" stroke-width="1"/><rect x="1" y="1" width="4" height="3.500" fill="#d0d0d0"/></svg>
  <svg style="left:112px;top:115px" width="16" height="14" viewBox="0 0 16 14"><rect x="0.500" y="0.500" width="15" height="13" fill="#c8c8c8" stroke="#d8d8d8" stroke-width="1.200"/><path d="M3 12Q3 6 8 5Q13 4 13 2" stroke="#555" stroke-width="1.200" fill="none"/><ellipse cx="8" cy="7" rx="4" ry="3" fill="#555" transform="rotate(-30 8 7)"/><path d="M1 13L15 1" stroke="#555" stroke-width="0.800"/></svg>
  <svg style="left:136px;top:115px" width="16" height="14" viewBox="0 0 16 14"><rect x="0.500" y="0.500" width="15" height="13" fill="url(#gd)" stroke="#d8d8d8" stroke-width="1.200"/></svg>
  <svg style="left:160px;top:115px" width="16" height="14" viewBox="0 0 16 14"><rect x="0.500" y="0.500" width="15" height="13" fill="#d4d4d4" stroke="#d8d8d8" stroke-width="1.200"/><path d="M1 11V8H4V6H7V8.500H10V4H13V2.500H15V6H12.500V8H9.500V11H6V9H3V11Z" fill="#444"/></svg>
  <svg style="left:184px;top:115px" width="16" height="14" viewBox="0 0 16 14"><rect x="0.500" y="0.500" width="15" height="13" fill="#d0d0d0" stroke="#d8d8d8" stroke-width="1.200"/><path d="M1 1L8 7L1 13Z" fill="#777"/><path d="M15 1L8 7L15 13Z" fill="#8a8a8a"/><path d="M1 1L15 13M15 1L1 13" stroke="#eee" stroke-width="0.800"/></svg>
  <svg style="left:208px;top:115px" width="16" height="14" viewBox="0 0 16 14"><rect x="0.500" y="0.500" width="15" height="13" fill="url(#gh)" stroke="#d8d8d8" stroke-width="1.200"/></svg>
  <div class="a" style="left:63px;top:139px;width:239px;height:5px;background:#303030;"></div>
  <div class="a" style="left:63px;top:144px;width:239px;height:17px;background:#3a3a3a;"></div>
  <div class="a" style="left:63px;top:144px;width:39px;height:17px;background:#535353;"></div>
  <div class="a" style="left:103px;top:144px;width:38px;height:17px;background:#484848;"></div>
  <div class="a" style="left:142px;top:144px;width:39px;height:17px;background:#484848;"></div>
  <div class="t" style="left:70px;top:145px;color:#f2f2f2;font-weight:bold;">图层</div>
  <div class="t" style="left:110px;top:145px;color:#b4b4b4;">通道</div>
  <div class="t" style="left:149px;top:145px;color:#b4b4b4;">路径</div>
  <svg style="left:288px;top:149px" width="12" height="8" viewBox="0 0 12 8"><path d="M0 1.500H4L2 4.500Z" fill="#cfcfcf"/><path d="M5 1H12M5 3.500H12M5 6H12" stroke="#cfcfcf" stroke-width="1.200"/></svg>
  <div class="a" style="left:63px;top:161px;width:239px;height:86px;background:#535353;"></div>
  <div class="a" style="left:68px;top:166px;width:69px;height:19px;background:#595959;border:1px solid #404040;border-radius:2px;box-sizing:border-box;"></div>
  <svg style="left:74px;top:170px" width="11" height="11" viewBox="0 0 11 11"><circle cx="6.500" cy="4.500" r="3.300" fill="none" stroke="#c8c8c8" stroke-width="1.400"/><path d="M4 7L0.500 10.500" stroke="#c8c8c8" stroke-width="1.600"/></svg>
  <div class="t" style="left:88px;top:168px;color:#c4c4c4;">类型</div>
  <svg style="left:126px;top:170px" width="7" height="12" viewBox="0 0 7 12"><path d="M0.500 4.500L3.500 1L6.500 4.500ZM0.500 7.500L3.500 11L6.500 7.500Z" fill="#a8a8a8"/></svg>
  <svg style="left:158px;top:169px" width="14" height="13" viewBox="0 0 14 13"><rect x="0.500" y="0.500" width="13" height="12" fill="none" stroke="#a6a6a6" stroke-width="1.100"/><path d="M2 10.500L5.500 6L8 9L10 7L12 10.500Z" fill="#a6a6a6"/><circle cx="10" cy="4" r="1.200" fill="#a6a6a6"/></svg>
  <svg style="left:183px;top:169px" width="13" height="13" viewBox="0 0 13 13"><circle cx="6.500" cy="6.500" r="6" fill="#a6a6a6"/><path d="M6.500 0.500A6 6 0 0 1 6.500 12.500A3 3 0 0 1 6.500 6.500A3 3 0 0 0 6.500 0.500Z" fill="#6a6a6a" transform="rotate(45 6.500 6.500)"/></svg>
  <svg style="left:207px;top:169px" width="12" height="13" viewBox="0 0 12 13"><path d="M0.500 0.500H11.500V4H10.500Q10 2 8 2H7.500V10.500Q7.500 11.500 9.500 11.500V12.500H2.500V11.500Q4.500 11.500 4.500 10.500V2H4Q2 2 1.500 4H0.500Z" fill="#a6a6a6"/></svg>
  <svg style="left:231px;top:168px" width="14" height="14" viewBox="0 0 14 14"><rect x="3" y="3" width="8" height="8" fill="none" stroke="#a6a6a6" stroke-width="1.100"/><rect x="1" y="1" width="3.500" height="3.500" fill="#535353" stroke="#a6a6a6" stroke-width="1"/><rect x="9.500" y="1" width="3.500" height="3.500" fill="#535353" stroke="#a6a6a6" stroke-width="1"/><rect x="1" y="9.500" width="3.500" height="3.500" fill="#535353" stroke="#a6a6a6" stroke-width="1"/><rect x="9.500" y="9.500" width="3.500" height="3.500" fill="#535353" stroke="#a6a6a6" stroke-width="1"/></svg>
  <svg style="left:255px;top:168px" width="14" height="14" viewBox="0 0 14 14"><path d="M4.500 0.500H10L13 3.500V11.500H4.500Z" fill="none" stroke="#a6a6a6" stroke-width="1.100"/><rect x="0.500" y="7.500" width="7" height="6" fill="#a6a6a6"/><path d="M2 7.500V5.500Q4 3.500 6 5.500V7.500" fill="none" stroke="#a6a6a6" stroke-width="1.100"/></svg>
  <div class="a" style="left:291px;top:167px;width:8px;height:17px;background:linear-gradient(#7a7a7a 0 45%,#3c3c3c 45%);border:1px solid #3a3a3a;box-sizing:border-box;border-radius:1px;"></div>
  <div class="a" style="left:63px;top:189px;width:239px;height:1px;background:#3e3e3e;"></div>
  <div class="a" style="left:68px;top:194px;width:109px;height:20px;background:#595959;border:1px solid #404040;border-radius:2px;box-sizing:border-box;"></div>
  <div class="t" style="left:76px;top:197px;color:#c4c4c4;">正常</div>
  <svg style="left:166px;top:198px" width="7" height="12" viewBox="0 0 7 12"><path d="M0.500 4.500L3.500 1L6.500 4.500ZM0.500 7.500L3.500 11L6.500 7.500Z" fill="#a8a8a8"/></svg>
  <div class="t" style="left:186px;top:197px;color:#c4c4c4;">不透明度:</div>
  <div class="a" style="left:244px;top:195px;width:35px;height:18px;background:#474747;border:1px solid #3c3c3c;box-sizing:border-box;"></div>
  <div class="t" style="left:247px;top:197px;color:#6a6a6a;font-size:11px;">100%</div>
  <div class="a" style="left:280px;top:195px;width:18px;height:18px;background:linear-gradient(#6a6a6a,#575757);border:1px solid #3c3c3c;box-sizing:border-box;"></div>
  <svg style="left:286px;top:202px" width="7" height="4" viewBox="0 0 7 4"><path d="M0 0H7L3.500 4Z" fill="#bdbdbd"/></svg>
  <div class="a" style="left:63px;top:219px;width:239px;height:1px;background:#3e3e3e;"></div>
  <div class="t" style="left:69px;top:225px;color:#c4c4c4;">锁定:</div>
  <svg style="left:106px;top:226px" width="12" height="12" viewBox="0 0 12 12"><rect width="12" height="12" fill="#8a8a8a"/><path d="M0 0H3V3H0ZM6 0H9V3H6ZM3 3H6V6H3ZM9 3H12V6H9ZM0 6H3V9H0ZM6 6H9V9H6ZM3 9H6V12H3ZM9 9H12V12H9Z" fill="#c8c8c8"/></svg>
  <svg style="left:128px;top:224px" width="15" height="15" viewBox="0 0 15 15"><path d="M14.500 0.500L6.500 8.500L8 10Z" fill="#a6a6a6"/><path d="M6 9Q3 9 2.500 11.500Q2 13.500 0.500 14Q5 15.500 7.500 13Q8.500 11.500 8 10.500Z" fill="#a6a6a6"/></svg>
  <svg style="left:149px;top:225px" width="15" height="15" viewBox="0 0 15 15"><path d="M7.500 1V14M1 7.500H14" stroke="#a6a6a6" stroke-width="1.300"/><path d="M7.500 0L5 3H10ZM7.500 15L5 12H10ZM0 7.500L3 5V10ZM15 7.500L12 5V10Z" fill="#a6a6a6"/></svg>
  <svg style="left:173px;top:225px" width="12" height="14" viewBox="0 0 12 14"><rect x="1" y="6" width="10" height="8" rx="1" fill="#a6a6a6"/><path d="M3 6V4Q3 1 6 1Q9 1 9 4V6" fill="none" stroke="#a6a6a6" stroke-width="1.600"/><rect x="5" y="8.500" width="2" height="3" fill="#535353"/></svg>
  <div class="t" style="left:211px;top:225px;color:#c4c4c4;">填充:</div>
  <div class="a" style="left:244px;top:224px;width:35px;height:17px;background:#474747;border:1px solid #3c3c3c;box-sizing:border-box;"></div>
  <div class="t" style="left:247px;top:225px;color:#6a6a6a;font-size:11px;">100%</div>
  <div class="a" style="left:280px;top:224px;width:18px;height:17px;background:linear-gradient(#6a6a6a,#575757);border:1px solid #3c3c3c;box-sizing:border-box;"></div>
  <svg style="left:286px;top:231px" width="7" height="4" viewBox="0 0 7 4"><path d="M0 0H7L3.500 4Z" fill="#bdbdbd"/></svg>
  <div class="a" style="left:63px;top:246px;width:239px;height:1px;background:#3a3a3a;"></div>
  <div class="a" style="left:63px;top:247px;width:225px;height:319px;background:#464646;"></div>
  <div class="a" style="left:288px;top:247px;width:14px;height:319px;background:#424242;border-left:1px solid #3a3a3a;box-sizing:border-box;"></div>
  <div class="a" style="left:63px;top:247px;width:31px;height:40px;background:#505050;"></div>
  <div class="a" style="left:94px;top:247px;width:194px;height:40px;background:#6a7f9a;"></div>
  <div class="a" style="left:63px;top:287px;width:225px;height:1px;background:#383838;"></div>
  <svg style="left:72px;top:263px" width="13" height="8" viewBox="0 0 16 10"><path d="M0.500 5Q8 -3 15.500 5Q8 13 0.500 5Z" fill="#cfcfcf"/><circle cx="8" cy="5" r="2.600" fill="#444"/><circle cx="7.200" cy="4.200" r="0.900" fill="#ddd"/></svg>
  <div class="a" style="left:97px;top:251px;width:33px;height:32px;background:#fff;border:1px solid #2a2a2a;box-sizing:border-box;"></div>
  <div class="t" style="left:142px;top:259px;color:#fff;font-style:italic;font-size:11.500px;">背景</div>
  <svg style="left:260px;top:260px" width="12" height="14" viewBox="0 0 12 14"><rect x="1" y="6" width="10" height="7.500" fill="none" stroke="#ececec" stroke-width="1.300"/><path d="M3 6V4Q3 1 6 1Q9 1 9 4V6" fill="none" stroke="#ececec" stroke-width="1.400"/><rect x="5" y="8.500" width="2" height="2.500" fill="#ececec"/></svg>
  <div class="a" style="left:165px;top:563px;width:6px;height:4px;background:#e0e0e0;border-radius:3px 3px 0 0;"></div>
  <div class="a" style="left:302px;top:0px;width:6px;height:566px;background:#3a3a3a;"></div>
</div>

<!-- ================= DIALOG ================= -->
<div id="dlg" class="a">
  <div class="a" style="left:0;top:0;width:254px;height:23px;background:#fff;"></div>
  <div class="t" style="left:4px;top:4px;">创建多边形</div>
  <svg style="left:234px;top:7px" width="11" height="11" viewBox="0 0 11 11"><path d="M0.500 0.500L10.500 10.500M10.500 0.500L0.500 10.500" stroke="#111" stroke-width="1.100"/></svg>
  <div class="t" style="left:22px;top:43px;">宽度:</div>
  <div class="inp" style="left:55px;top:40px;width:68px;">202 像素</div>
  <div class="t" style="left:138px;top:43px;">高度:</div>
  <div class="inp" style="left:171px;top:40px;width:68px;"></div>
  <div class="a" style="left:176px;top:43px;width:46px;height:14px;background:#3390ff;"></div>
  <div class="t" style="left:176px;top:43px;color:#fff;">202像素</div>
  <div class="t" style="left:22px;top:78px;">边数:</div>
  <div class="inp" style="left:55px;top:75px;width:40px;">8</div>
  <div class="cb" style="left:15px;top:110px;"></div>
  <div class="t" style="left:31px;top:110px;">平滑拐角</div>
  <div class="cb" style="left:15px;top:138px;"></div>
  <div class="t" style="left:31px;top:138px;">星形</div>
  <div class="t" style="left:28px;top:169px;color:#a2a2a2;">缩进边依据:</div>
  <div class="inp" style="left:96px;top:167px;width:68px;height:19px;line-height:17px;background:#f4f4f4;border-color:#d4d4d4;color:#777;">50%</div>
  <div class="cb" style="left:15px;top:202px;border-color:#d0d0d0;"></div>
  <div class="t" style="left:31px;top:201px;color:#8a8a8a;">平滑缩进</div>
  <div class="btn" style="left:16px;top:230px;width:107px;">取消</div>
  <div class="btn" style="left:132px;top:230px;width:107px;border:2px solid #2d74b4;line-height:16px;">确定</div>
</div>
<!-- red annotation rectangle -->
<div class="a" style="left:253px;top:174px;width:263px;height:142px;border:3px solid #ee3a42;box-sizing:border-box;border-radius:1px;"></div>

<!-- window frame -->
<div class="a" style="left:0;top:0;width:919px;height:1px;background:#333;"></div>
<div class="a" style="left:0;top:0;width:1px;height:632px;background:#333;"></div>
<div class="a" style="left:913px;top:20px;width:6px;height:46px;background:#4a4a4a;"></div>
<div class="a" style="left:912px;top:0;width:7px;height:20px;background:#3a3f45;"></div>
</body>
</html>
